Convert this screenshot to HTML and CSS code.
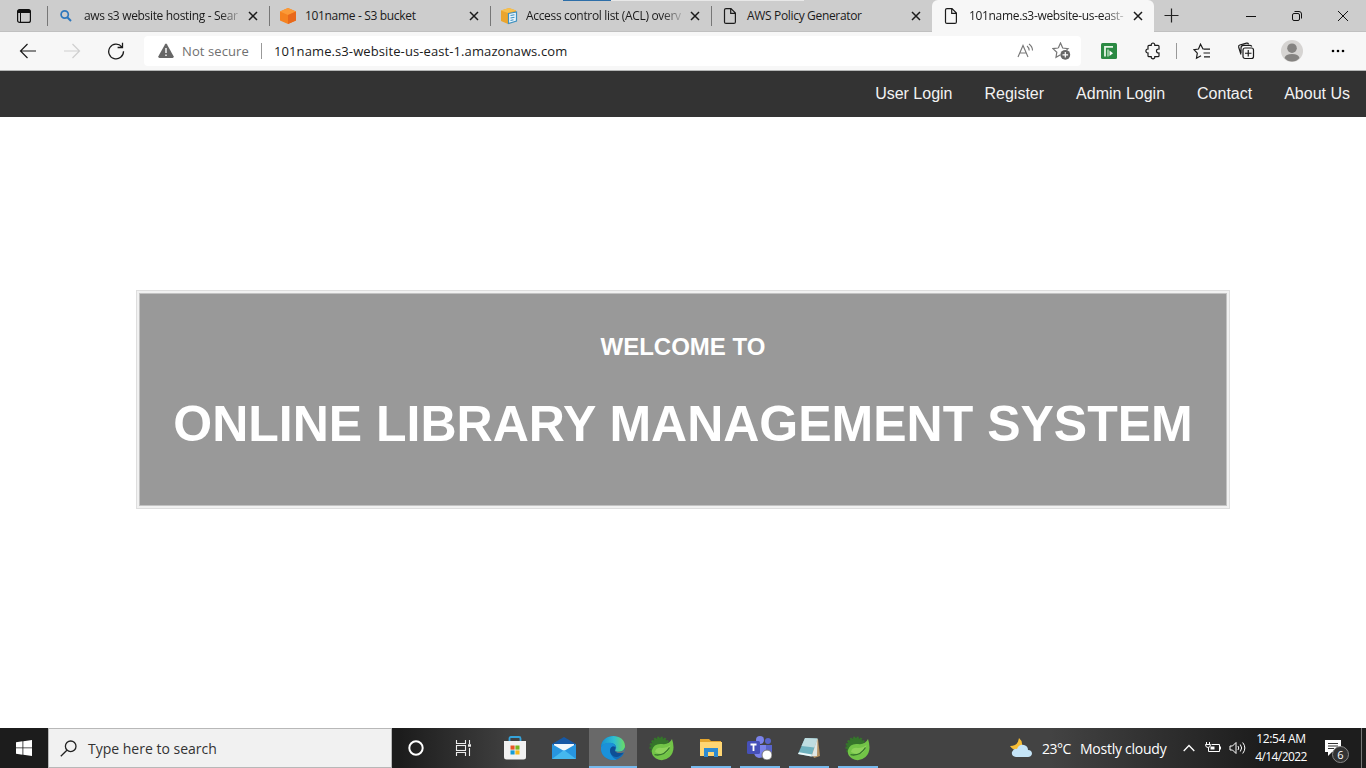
FILE: index.html
```html
<!DOCTYPE html>
<html lang="en">
<head>
<meta charset="utf-8">
<title>Online Library Management System</title>
<link rel="stylesheet" href="styles.css">
</head>
<body>
<div class="screen">
<header class="tabs">
  <div class="tab-menu"><svg width="16" height="16" viewBox="0 0 16 16"><rect x="1.6" y="1.6" width="12.8" height="12.8" rx="2" fill="none" stroke="#111" stroke-width="1.2"/><path d="M1.5 3.5Q1.5 1.5 3.5 1.5H12.5Q14.5 1.5 14.5 3.5V5H1.500Z" fill="#111"/><path d="M4.500 5V14" stroke="#111"/></svg></div>
  <div class="tab first">
    <svg class="fav" width="16" height="16" viewBox="0 0 16 16"><circle cx="6.700" cy="6.500" r="3.600" fill="none" stroke="#2f78bd" stroke-width="1.700"/><path d="M9.300 9.300L13 13" stroke="#2f78bd" stroke-width="2"/></svg>
    <span class="tab-title fade">aws s3 website hosting - Sear</span>
    <svg class="close" width="10" height="10" viewBox="0 0 10 10"><path d="M1 1L9 9M9 1L1 9"/></svg>
  </div>
  <div class="tab">
    <svg class="fav" width="18" height="18" viewBox="0 0 18 18"><path d="M9 1L17 4.500V13.500L9 17L1 13.500V4.500Z" fill="#f58220"/><path d="M9 1L17 4.500L9 8L1 4.500Z" fill="#fb9a38"/><path d="M9 8L17 4.500V13.500L9 17Z" fill="#e8681b"/></svg>
    <span class="tab-title">101name - S3 bucket</span>
    <svg class="close" width="10" height="10" viewBox="0 0 10 10"><path d="M1 1L9 9M9 1L1 9"/></svg>
  </div>
  <div class="tab">
    <svg class="fav" width="18" height="18" viewBox="0 0 18 18"><path d="M1 3.500L9 1L16 3.500V14L8 17L1 14Z" fill="#eba52d"/><path d="M1 3.500L9 1L16 3.500L8 6Z" fill="#f7c04e"/><path d="M8.500 6.500L16.500 5V14L8.500 16.500Z" fill="#e9f4fb" stroke="#3e91c2" stroke-width="1.200"/><path d="M10.500 8.500L14.500 7.700M10.500 11L14.500 10.200M10.500 13.500L13.500 12.800" stroke="#3e91c2" stroke-width="1.100"/></svg>
    <span class="tab-title fade">Access control list (ACL) overv</span>
    <svg class="close" width="10" height="10" viewBox="0 0 10 10"><path d="M1 1L9 9M9 1L1 9"/></svg>
  </div>
  <div class="tab">
    <svg class="fav page-icon" width="14" height="18" viewBox="0 0 14 18"><path d="M3 1.600H8L12.400 6V14.900Q12.400 16.400 10.900 16.400H3Q1.500 16.400 1.500 14.900V3.100Q1.500 1.600 3 1.600ZM7.700 1.600V6.300H12.400" fill="none" stroke="#1c1c1c" stroke-width="1.200"/></svg>
    <span class="tab-title">AWS Policy Generator</span>
    <svg class="close" width="10" height="10" viewBox="0 0 10 10"><path d="M1 1L9 9M9 1L1 9"/></svg>
  </div>
  <div class="tab active">
    <svg class="fav page-icon" width="14" height="18" viewBox="0 0 14 18"><path d="M3 1.600H8L12.400 6V14.900Q12.400 16.400 10.900 16.400H3Q1.500 16.400 1.500 14.900V3.100Q1.500 1.600 3 1.600ZM7.700 1.600V6.300H12.400" fill="none" stroke="#1c1c1c" stroke-width="1.200"/></svg>
    <span class="tab-title fade">101name.s3-website-us-east-</span>
    <svg class="close" width="10" height="10" viewBox="0 0 10 10"><path d="M1 1L9 9M9 1L1 9"/></svg>
  </div>
  <div class="new-tab"><svg width="15" height="15" viewBox="0 0 15 15"><path d="M7.500 .5V14.500M.5 7.500H14.500" stroke="#222" stroke-width="1.200"/></svg></div>
  <div class="window-controls">
    <svg width="12" height="12" viewBox="0 0 12 12"><path d="M1 6.500H11" stroke="#111"/></svg>
    <svg width="12" height="12" viewBox="0 0 12 12" fill="none" stroke="#111"><rect x="1.500" y="3.500" width="7" height="7" rx="1.500"/><path d="M3.500 1.500H8Q10.500 1.500 10.500 4V8.500"/></svg>
    <svg width="12" height="12" viewBox="0 0 12 12"><path d="M1 1L11 11M11 1L1 11" stroke="#111"/></svg>
  </div>
  <div class="top-strip"></div>
</header>

<div class="toolbar">
  <div class="nav-buttons">
    <svg width="18" height="16" viewBox="0 0 18 16" fill="none" stroke="#1b1b1b" stroke-width="1.200"><path d="M17 8H1.500M8.500 1L1.500 8L8.500 15"/></svg>
    <svg width="18" height="16" viewBox="0 0 18 16" fill="none" stroke="#cfcfcf" stroke-width="1.200"><path d="M1 8H16.500M9.500 1L16.500 8L9.500 15"/></svg>
    <svg width="18" height="18" viewBox="0 0 18 18" fill="none" stroke="#1b1b1b" stroke-width="1.300"><path d="M14.800 4.800A7.400 7.400 0 1 0 16.500 9.300M15.500 .8V5.500H10.600"/></svg>
  </div>
  <div class="address">
    <svg class="warn" width="16" height="16" viewBox="0 0 16 16"><path d="M7.100 1.200Q8 0 8.900 1.200L15.600 13.200Q16 14.900 14.500 15H1.500Q0 14.900 .4 13.200Z" fill="#666"/><path d="M8 5V10M8 11.500V13" stroke="#fff" stroke-width="1.400"/></svg>
    <span class="insecure">Not secure</span><i class="divider"></i><span class="url">101name.s3-website-us-east-1.amazonaws.com</span>
    <svg class="read" width="18" height="16" viewBox="0 0 18 16" fill="none" stroke="#777" stroke-width="1.100"><path d="M1 14L6 2.500L11 14M2.700 10H9.300M10 3Q12 4.500 12.200 7.500M12 1Q15.500 3.500 15.500 7.500"/></svg>
    <svg class="star" width="19" height="18" viewBox="0 0 19 18"><path d="M6.300 6L8.500 1L10.700 6L16 6.600L14.500 8M8.500 12.800L4 15.300L4.800 10.200L1 6.600L6.300 6" fill="none" stroke="#777" stroke-width="1.200"/><circle cx="13.300" cy="12.800" r="4.900" fill="#666"/><path d="M13.300 10V15.600M10.500 12.800H16.100" stroke="#fff" stroke-width="1.200"/></svg>
  </div>
  <div class="actions">
    <svg class="a-ext" width="16" height="16" viewBox="0 0 16 16"><rect width="16" height="16" rx="1.500" fill="#2b8a43"/><path d="M4 13.500V3.800H12" fill="none" stroke="#e6f6e7" stroke-width="1.800"/><path d="M7 6.500V13.500" stroke="#c8ebcc" stroke-width="1.300"/><path d="M8.500 7.500L12 10.200L8.500 13Z" fill="#fff"/></svg>
    <svg class="a-puzzle" width="16" height="18" viewBox="0 0 16 18"><path d="M4 3.300H6.200C6 .2 10 .2 9.800 3.300H13Q14 3.300 14 4.300V7C10.600 6.700 10.600 11.300 14 11V13.700Q14 14.700 13 14.700H9.800C10 17.500 6 17.500 6.200 14.700H4Q3 14.700 3 13.700V11C.2 11.200 .2 6.800 3 7V4.300Q3 3.300 4 3.300Z" fill="none" stroke="#1b1b1b" stroke-width="1.200"/></svg>
    <i class="divider"></i>
    <svg class="a-fav" width="18" height="17" viewBox="0 0 18 17" fill="none" stroke="#1b1b1b" stroke-width="1.200"><path d="M11 6H10L7.500 1.200L5.500 6L1 6.700L4.300 10.200L3.500 15.200L8 12.700M11 6.200H17M10.500 10H17M11 13.800H17"/></svg>
    <svg class="a-col" width="18" height="18" viewBox="0 0 18 18" fill="none" stroke="#1b1b1b" stroke-width="1.200"><path d="M4 12.500L1.700 5.200Q1.200 3.500 2.800 3L9.500 1.200Q11 .8 11.600 2.200M4 11V6Q4 3.300 6.700 3.300H13Q14.500 3.300 14.800 4.500"/><rect x="6" y="6" width="10.500" height="10.500" rx="2"/><path d="M11.250 8V14.500M8 11.250H14.500"/></svg>
    <svg class="a-user" width="22" height="22" viewBox="0 0 22 22"><circle cx="11" cy="11" r="11" fill="#d6d4d2"/><circle cx="11" cy="8.200" r="4.800" fill="#858381"/><path d="M3.500 18Q4.500 14 11 14T18.500 18Q15.500 21.500 11 21.500T3.500 18Z" fill="#858381"/></svg>
    <svg class="a-more" width="14" height="4" viewBox="0 0 14 4"><circle cx="2" cy="2" r="1.300"/><circle cx="7" cy="2" r="1.300"/><circle cx="12" cy="2" r="1.300"/></svg>
  </div>
</div>

<nav class="site-nav"><a>User Login</a><a>Register</a><a>Admin Login</a><a>Contact</a><a>About Us</a></nav>
<main class="page"><section class="welcome"><h2>WELCOME TO</h2><h1>ONLINE LIBRARY MANAGEMENT SYSTEM</h1></section></main>

<footer class="taskbar">
  <div class="start"><svg width="16" height="16" viewBox="0 0 16 16" fill="#fff"><path d="M0 2.200L6.500 1.300V7.500H0ZM7.300 1.200L16 0V7.500H7.300ZM0 8.300H6.500V14.700L0 13.800ZM7.300 8.300H16V16L7.300 14.800Z"/></svg></div>
  <div class="search"><svg width="17" height="17" viewBox="0 0 17 17" fill="none" stroke="#222" stroke-width="1.300"><circle cx="10.700" cy="6.300" r="5.300"/><path d="M6.900 10.200L.8 16.200"/></svg><span>Type here to search</span></div>
  <div class="apps">
    <div class="app cortana"><svg width="16" height="16" viewBox="0 0 16 16"><circle cx="8" cy="8" r="6.700" fill="none" stroke="#fff" stroke-width="2"/></svg></div>
    <div class="app view"><svg width="17" height="16" viewBox="0 0 17 16" fill="none" stroke="#eee" stroke-width="1.100"><path d="M1.500 0V3.500H10.500V0M1.500 16V12.500H10.500V16M14.500 0V4M14.500 8V16"/><rect x="1.500" y="5.500" width="9" height="5"/><path d="M13 5.500H16" stroke-width="2.500"/></svg></div>
    <div class="app"><svg width="24" height="24" viewBox="0 0 24 24"><path d="M6.500 6V2.500Q6.500 1 8 1H16Q17.500 1 17.500 2.500V6" fill="none" stroke="#35a3da" stroke-width="1.800"/><path d="M1 5H23V21Q23 23.500 20.500 23.500H3.500Q1 23.500 1 21Z" fill="#f1f1f1"/><path d="M7.500 9.500H11.600V13.600H7.500Z" fill="#e85524"/><path d="M12.400 9.500H16.500V13.600H12.400Z" fill="#7ab51d"/><path d="M7.500 14.400H11.600V18.500H7.500Z" fill="#159bd7"/><path d="M12.400 14.400H16.500V18.500H12.400Z" fill="#f6b81a"/></svg></div>
    <div class="app"><svg width="24" height="24" viewBox="0 0 24 24"><path d="M0 8L12 1L24 8V12H0Z" fill="#1659a6"/><path d="M2 8H22V16H2Z" fill="#f2f8fc"/><path d="M0 8L12 15L24 8V23H0Z" fill="#2795df"/><path d="M0 23L12 14L24 23Z" fill="#45b8ee"/></svg></div>
    <div class="app current"><svg width="24" height="24" viewBox="0 0 24 24"><defs><linearGradient id="eg" x1="0" x2="1"><stop stop-color="#1690d3"/><stop offset=".55" stop-color="#30bfd0"/><stop offset="1" stop-color="#6cdb63"/></linearGradient></defs><circle cx="12" cy="12" r="12" fill="#126eb9"/><path d="M0 11C1-4 24-3 24 10C24 16 16 17 14 14.500C17 11 14 7 9 7Q3 7 0 11Z" fill="url(#eg)"/><path d="M0 11C4 5 14 6 14.500 11C11 9 8 13 9.500 17C11 22 16 24 16 24C7 25-1 20 0 11Z" fill="#1b91d9"/><path d="M9.500 17C8 12 11 9.500 14 11C15 12.500 13 13.500 14.500 15.500C17 18 21 17 23 16C18 23 12 22 9.500 17Z" fill="#0d4f96"/><path d="M14.300 11.500C15 13 13 13.500 14.500 15.500C17 18 21 17 23 16L22 18.500L23.500 16L24 12C23 16 16 17 14 14.500Z" fill="#6e7274"/></svg></div>
    <div class="app"><svg width="25" height="25" viewBox="0 0 25 25"><circle cx="11" cy="11" r="9.300" fill="#35752b" stroke="#35752b" stroke-width="2.600" stroke-dasharray="2 1.400"/><path d="M23 3Q27 15 20.500 21Q14 26.500 7 22.500Q2 19 3 14Q5 7 13 8Q20 9 23 3Z" fill="#72c447"/><path d="M6 16Q7 11 13 12Q18 12 21.500 9Q20 18 13 18Q9 18 6 16Z" fill="#8dd35b"/><path d="M5.500 18.700Q15 20.500 20.500 11.500" fill="none" stroke="#35752b" stroke-width="1.300"/></svg></div>
    <div class="app open"><svg width="22" height="20" viewBox="0 0 22 20"><path d="M0 1H9L11 3H21V10H0Z" fill="#e5a62e"/><path d="M0 4H22V18H0Z" fill="#ffd673"/><path d="M4 19V10H18V19H14V14H8V19Z" fill="#2f8bd1"/></svg></div>
    <div class="app open"><svg width="25" height="24" viewBox="0 0 25 24"><circle cx="13" cy="4" r="4" fill="#7b83eb"/><circle cx="21" cy="5" r="3" fill="#5964c9"/><path d="M15 9H25V16Q24 20 18 20Z" fill="#5964c9"/><path d="M7 9H19V16Q18 22 12 22Q7 21 7 16Z" fill="#7b83eb"/><rect y="5" width="13" height="13" rx="1.500" fill="#4650b8"/><path d="M3.500 8.500H9.500M6.500 8.500V15" stroke="#fff" stroke-width="1.800"/><circle cx="20" cy="19" r="5" fill="#fff" stroke="#777"/></svg></div>
    <div class="app open"><svg width="24" height="24" viewBox="0 0 24 24"><path d="M8 2L21 3L23 20L17 22Z" fill="#b59263"/><path d="M8 2L20.500 2.500L14.500 20.500L1 18Z" fill="#6fb2bf"/><path d="M8 2L20.500 2.500L17.500 11.500L4.500 10Z" fill="#bfdde1"/><path d="M1 18L14.500 20.500L15 18.500L2 16.300Z" fill="#eef9fa"/><path d="M20.500 2.500L14.500 20.500L20 20Z" fill="#dfe7e5"/></svg></div>
    <div class="app open"><svg width="25" height="25" viewBox="0 0 25 25"><circle cx="11" cy="11" r="9.300" fill="#35752b" stroke="#35752b" stroke-width="2.600" stroke-dasharray="2 1.400"/><path d="M23 3Q27 15 20.500 21Q14 26.500 7 22.500Q2 19 3 14Q5 7 13 8Q20 9 23 3Z" fill="#72c447"/><path d="M6 16Q7 11 13 12Q18 12 21.500 9Q20 18 13 18Q9 18 6 16Z" fill="#8dd35b"/><path d="M5.500 18.700Q15 20.500 20.500 11.500" fill="none" stroke="#35752b" stroke-width="1.300"/></svg></div>
  </div>
  <div class="tray">
    <svg class="weather" width="23" height="20" viewBox="0 0 23 20"><path d="M9 0Q8 8 0 8Q4 14 11 11Q14 4 9 0Z" fill="#f6bd35"/><path d="M6 19Q1 18 2 14Q4 10 7 11Q9 6 14 7Q18 8 18 12Q22 12 22 16Q21 19 18 19Z" fill="#c5e4f7"/></svg>
    <span class="temp">23°C</span><span class="condition">Mostly cloudy</span>
    <svg class="chev" width="12" height="8" viewBox="0 0 12 8"><path d="M.7 7L6 1.500L11.300 7" fill="none" stroke="#fff" stroke-width="1.300"/></svg>
    <svg class="battery" width="17" height="14" viewBox="0 0 17 14" fill="none" stroke="#fff"><path d="M6.500 3.500H14.500V10.500H3.500V6.500M15.500 5.500V8.500M1.500 1V3M4.500 1V3M.5 3.500H5.500Q5.500 6.500 3 6.500T.5 3.500"/><path d="M5.500 5.500H9.500V8.500H5.500Z" fill="#fff" stroke="none"/></svg>
    <svg class="volume" width="18" height="14" viewBox="0 0 18 14" fill="none" stroke="#fff"><path d="M1 5H3.500L7 1.500V12.500L3.500 9H1ZM9 5Q10.500 7 9 9M11.300 3.500Q14 7 11.300 10.500M13.700 1.500Q18 7 13.700 12.500"/></svg>
    <div class="clock"><span class="time">12:54 AM</span><span class="date">4/14/2022</span></div>
    <div class="notice"><svg width="16" height="16" viewBox="0 0 16 16"><path d="M0 0H16V12H7L3 16V12H0Z" fill="#fff"/><path d="M3 3.500H13M3 6H13M3 8.500H9" stroke="#333"/></svg><b>6</b></div>
    <i class="show-desktop"></i>
  </div>
</footer>
</div>
</body>
</html>
```
FILE: styles.css
```css
* { box-sizing: border-box; }
body { margin: 0; overflow: hidden; font-family: "Open Sans", "Noto Sans", sans-serif; }
svg { display: block; flex: none; }
.screen { width: 1366px; height: 768px; display: flex; flex-direction: column; background: #fff; }
.tabs { position: relative; height: 32px; display: flex; background: #cdcdcd; box-shadow: inset 0 -1px #c0c0c0; font-size: 12px; color: #1b1b1b; }
.top-strip { position: absolute; left: 563px; top: 0; width: 241px; height: 1px; background: linear-gradient(90deg, #2d6ea8 0 48px, #e8e8e8 48px); }
.tab-menu { width: 47px; padding: 8px 0 0 16px; }
.tab { position: relative; width: 221px; display: flex; align-items: center; padding-left: 10px; }
.tab.first { width: 222px; padding-left: 11px; }
.tab::before { content: ""; position: absolute; left: 0; top: 6px; width: 1px; height: 20px; background: #777; }
.tab.active { width: 222px; background: #f7f7f7; border-radius: 6px 6px 0 0; }
.tab.active::before { display: none; }
.fav { margin-right: auto; }
.page-icon { margin-left: 2px; }
.tab-title { width: 160px; white-space: nowrap; line-height: 20px; letter-spacing: -.33px; }
.fade { -webkit-mask-image: linear-gradient(90deg, #000 136px, transparent 160px); mask-image: linear-gradient(90deg, #000 136px, transparent 160px); }
.close { margin: 0 11px 0 4px; stroke: #1b1b1b; stroke-width: 1.5; }
.new-tab { padding: 8px 0 0 10px; }
.window-controls { margin-left: auto; padding: 10px 17px 0 0; display: flex; gap: 34px; }
.toolbar { height: 39px; display: flex; background: #f7f7f7; border-bottom: 1px solid #b5b7b6; }
.nav-buttons { width: 144px; padding: 0 6px; display: grid; grid-template-columns: repeat(3, 44px); place-items: center; }
.address { width: 937px; height: 30px; margin-top: 4px; padding: 0 10px 0 14px; display: flex; align-items: center; border-radius: 4px; background: #fff; font-size: 13px; color: #1b1b1b; }
.insecure { margin-left: 8px; width: 68px; color: #707070; white-space: nowrap; letter-spacing: .1px; }
.divider { width: 1px; height: 16px; background: #999; flex: none; }
.address .divider { margin: 0 12px 0 11px; }
.url { white-space: nowrap; letter-spacing: .1px; }
.read { margin-left: auto; }
.star { margin-left: 17px; }
.actions { display: flex; align-items: center; flex: 1; }
.a-ext { margin-left: 20px; }
.a-puzzle { margin: 0 15px 0 28px; }
.divider + .a-fav { margin-left: 16px; }
.a-col { margin-left: 26px; }
.a-user { margin-left: 26px; }
.a-more { margin-left: 28px; }
.site-nav { height: 46px; display: flex; justify-content: flex-end; background: #333; color: #f2f2f2; font: 16px/18px "Liberation Sans", Arial, sans-serif; }
.site-nav a { padding: 14px 16px; }
.page { flex: 1; display: flex; justify-content: center; align-items: flex-start; padding-top: 173px; }
.welcome { width: 1094px; height: 219px; border: 1px solid #dedede; background: #999; box-shadow: inset 0 0 0 2px #f1f1f1, inset 0 0 0 3px #c2c2c2; color: #fff; text-align: center; font-family: "Liberation Sans", Arial, sans-serif; }
.welcome h2 { margin: 42px 0 0; font-size: 24px; line-height: 28px; }
.welcome h1 { margin: 34px 0 0; font-size: 50px; line-height: 58px; white-space: nowrap; }
.taskbar { height: 40px; display: flex; background: linear-gradient(90deg, #1c1c1c 0 400px, #434343 520px 1050px, #1d1d1d 1260px); color: #fff; }
.start { width: 48px; display: grid; place-items: center; }
.search { width: 344px; display: flex; align-items: center; gap: 11px; padding-left: 11px; background: #f1f1f1; border: 1px solid #b8b8b8; color: #333; font-size: 14px; white-space: nowrap; }
.apps { display: flex; }
.app { width: 49px; display: grid; place-items: center; }
.app.cortana { width: 48px; }
.app.view { width: 47px; margin-right: 3px; }
.app.current { width: 48px; margin-left: 1px; background: #696969; border-bottom: 2px solid #76b9ed; padding-top: 2px; }
.app.open { background: linear-gradient(#76b9ed, #76b9ed) center bottom / 40px 2px no-repeat; }
.tray { margin-left: auto; display: flex; align-items: center; font-size: 14px; white-space: nowrap; }
.temp { width: 38px; margin-left: 9px; letter-spacing: -.5px; }
.condition { width: 96px; letter-spacing: -.25px; }
.chev { margin-left: 7px; }
.battery { margin-left: 10px; }
.volume { margin-left: 7px; }
.clock { width: 70px; margin-left: -1px; display: flex; flex-direction: column; align-items: center; font-size: 12px; line-height: 18px; }
.time { letter-spacing: -.3px; }
.date { letter-spacing: -.6px; }
.notice { position: relative; width: 37px; height: 40px; padding: 12px 0 0 9px; }
.notice b { position: absolute; left: 16px; top: 18px; width: 17px; height: 17px; border: 1px solid #888; border-radius: 50%; background: #333; font: 11px/15px "Open Sans", sans-serif; text-align: center; }
.show-desktop { width: 5px; height: 40px; margin-left: 8px; border-left: 1px solid #777; }
```
